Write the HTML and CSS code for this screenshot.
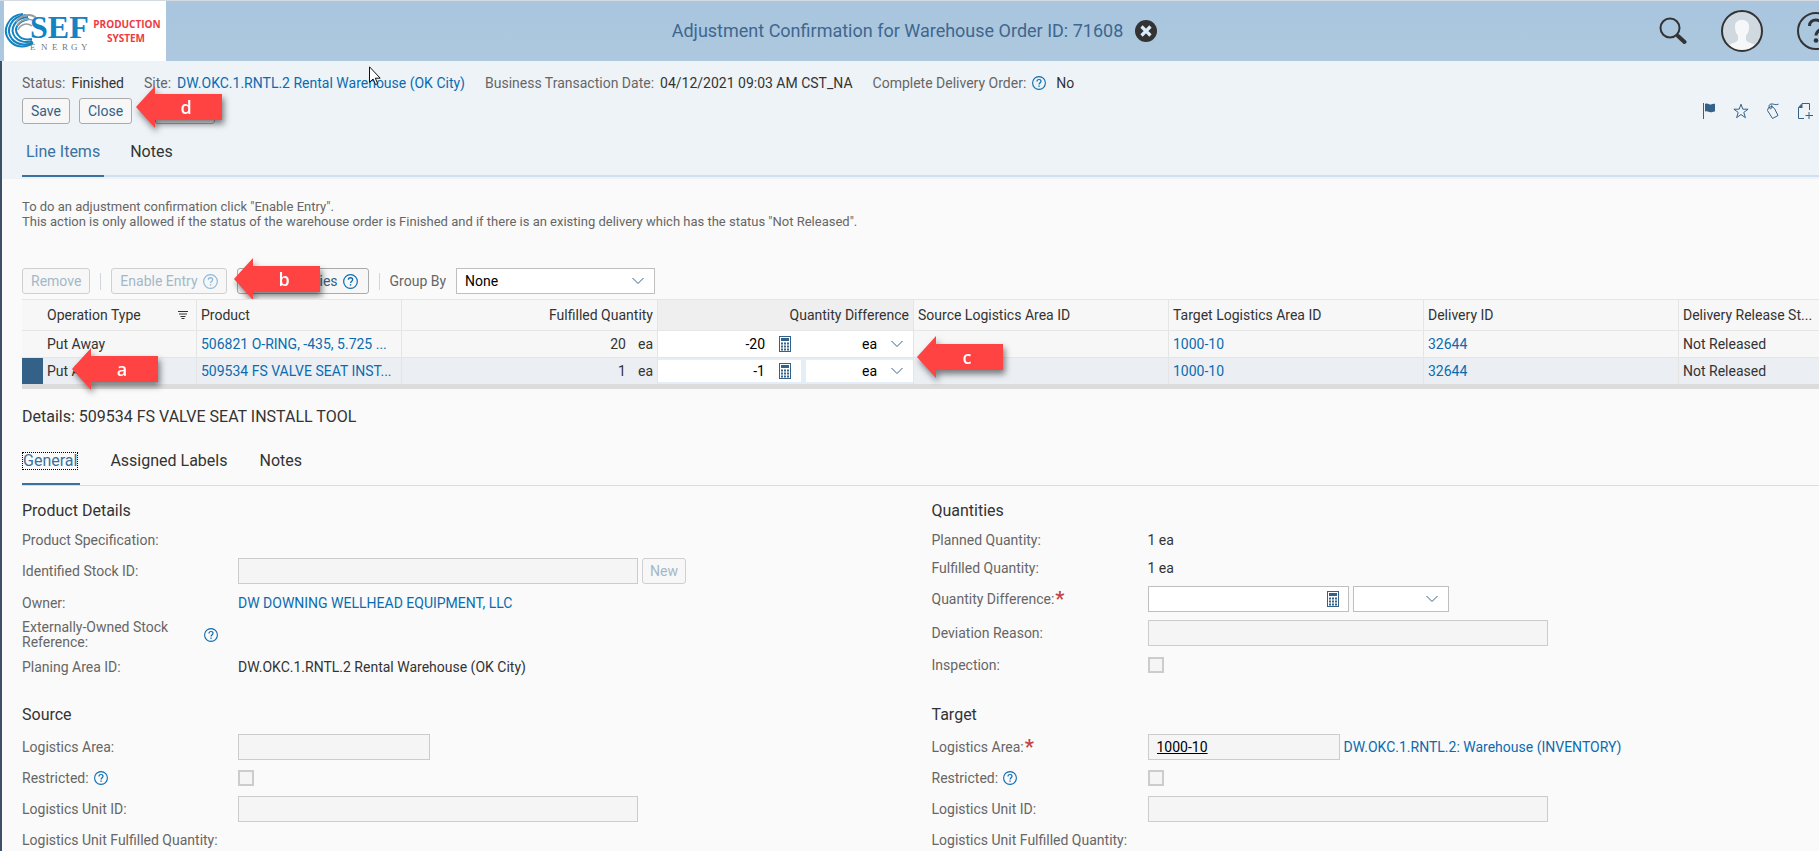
FILE: index.html
```html
<!DOCTYPE html>
<html lang="en">
<head>
    <meta charset="UTF-8">
    <meta name="viewport" content="width=device-width, initial-scale=1.0">
    <title>Adjustment Confirmation</title>
    <link rel="stylesheet" href="styles.css">
</head>
<body>

<!-- shared icons -->
<svg class="sprite" width="0" height="0" aria-hidden="true">
    <symbol id="icon-help" viewBox="0 0 14 14">
        <circle cx="7" cy="7" r="6.4" fill="none" stroke="currentColor" stroke-width="1.1"/>
        <path d="M5 5.4C5 4.2 5.8 3.5 7 3.5s2 .8 2 1.8c0 1.3-1.9 1.5-1.9 3.1" fill="none" stroke="currentColor" stroke-width="1.2"/>
        <rect x="6.4" y="9.5" width="1.3" height="1.3" fill="currentColor"/>
    </symbol>
    <symbol id="icon-calc" viewBox="0 0 12 16">
        <rect x=".5" y=".5" width="11" height="15" fill="#fff" stroke="#346187"/>
        <path d="M2 2h8v3H2zM2 6.500h2v2H2zM5 6.500h2v2H5zM8 6.500h2v2H8zM2 9.500h2v2H2zM5 9.500h2v2H5zM8 9.500h2v2H8zM2 12.500h2v2H2zM5 12.500h2v2H5zM8 12.500h2v2H8z" fill="#346187"/>
    </symbol>
    <symbol id="icon-arrow" viewBox="0 0 86 42">
        <path d="M0 21L19 0v8h67v26H19v8z" fill="#ff4343"/>
    </symbol>
</svg>

<header class="topbar">
    <a class="logo" href="#" aria-label="SEF Energy">
        <svg width="162" height="60" viewBox="0 0 162 60">
            <g fill="none" stroke="#1483c2">
                <path d="M19 13C4 14-3 30 6 40c6 7 16 7 23 2" stroke-width="2"/>
                <path d="M22 14C7 15 1 29 8 38c5 6 14 7 21 3" stroke-width="2"/>
                <path d="M24 16C11 17 5 28 11 36c4 5 11 6 17 4" stroke-width="2"/>
                <path d="M25 18C14 20 9 28 14 34c3 4 9 5 14 4" stroke-width="2"/>
            </g>
            <g fill="none" stroke="#9a9c9e">
                <path d="M12 21c5-8 16-9 21-3" stroke-width="2"/>
                <path d="M13 25c4-8 14-8 18-4" stroke-width="1.500"/>
                <path d="M14 29c3-7 10-7 14-4" stroke-width="1.500"/>
            </g>
            <text class="logo-name" x="26" y="37">SEF</text>
            <text class="logo-sub" x="26 37 48 58 67 77" y="49">ENERGY</text>
            <text class="logo-env" x="123" y="27">PRODUCTION</text>
            <text class="logo-env" x="122" y="41">SYSTEM</text>
        </svg>
    </a>
    <div class="topbar-title">
        <h1>Adjustment Confirmation for Warehouse Order ID: 71608</h1>
        <button class="icon-button" type="button" aria-label="Close window">
            <svg width="22" height="22" viewBox="0 0 22 22"><circle cx="11" cy="11" r="11" fill="#333"/><path d="M6.500 6.500l9 9M15.500 6.500l-9 9" stroke="#dcebf8" stroke-width="3.200"/></svg>
        </button>
    </div>
    <div class="topbar-tools">
        <button class="icon-button" type="button" aria-label="Search">
            <svg width="28" height="28" viewBox="0 0 28 28"><circle cx="11" cy="11" r="9.500" fill="none" stroke="#333" stroke-width="2"/><path d="M17.500 17.500l2 2" stroke="#333" stroke-width="2"/><path d="M19 19l6.500 6" stroke="#333" stroke-width="4" stroke-linecap="round"/></svg>
        </button>
        <button class="icon-button" type="button" aria-label="User">
            <svg width="42" height="42" viewBox="0 0 42 42">
                <circle cx="21" cy="21" r="20" fill="#d1d9e0"/>
                <path d="M21 10c5 0 7.500 3 7 8-.3 4-1.500 6-3 7.500V30c1 2.500 6 3 10 5.500-8 7.500-20 7.500-28 0C11 33 16 32.500 17 30v-4.500c-1.500-1.500-2.700-3.500-3-7.500-.5-5 2-8 7-8z" fill="#f5f7f9"/>
                <circle cx="21" cy="21" r="20" fill="none" stroke="#333" stroke-width="2"/>
            </svg>
        </button>
        <button class="icon-button" type="button" aria-label="Help">
            <svg width="38" height="38" viewBox="0 0 38 38"><circle cx="19" cy="19" r="18" fill="none" stroke="#333" stroke-width="2"/><path d="M12.500 14c0-4 3-6 6.500-6s6.500 2.300 6.500 5.500C25.500 18 19 18 19 23.500" fill="none" stroke="#333" stroke-width="3"/><circle cx="19" cy="28.500" r="2.300" fill="#333"/></svg>
        </button>
    </div>
</header>

<main class="content">
    <section class="object-header">
        <dl class="facts">
            <div><dt>Status:</dt><dd>Finished</dd></div>
            <div><dt>Site:</dt><dd><a href="#">DW.OKC.1.RNTL.2 Rental Warehouse (OK City)</a></dd></div>
            <div><dt>Business Transaction Date:</dt><dd>04/12/2021 09:03 AM CST_NA</dd></div>
            <div class="with-help"><dt>Complete Delivery Order:</dt><dd><svg class="help"><use href="#icon-help"/></svg>No</dd></div>
        </dl>
        <svg class="cursor" width="12" height="20" viewBox="0 0 12 20"><path d="M.5.8v15.500l3.600-3.300 2.400 5.600 2.200-1-2.400-5.400h4.900z" fill="#fff" stroke="#111"/></svg>
        <div class="actions">
            <button class="btn" type="button">Save</button>
            <button class="btn" type="button">Close</button>
            <button class="btn btn-more" type="button" aria-label="More"></button>
            <span class="callout callout-d"><svg><use href="#icon-arrow"/></svg><b>d</b></span>
            <div class="action-icons">
                <button class="icon-button" type="button" aria-label="Flag"><svg width="16" height="16" viewBox="0 0 16 16"><path d="M2.500 0v16" stroke="#346187"/><path d="M4 1c3-1.500 4 1 6 .5 1.500-.5 2.500-1 4-.5v7.500c-2-.5-2.500 1-4.500.8C7.500 9 6.500 7.500 4 8.500z" fill="#346187"/></svg></button>
                <button class="icon-button" type="button" aria-label="Favorite"><svg width="16" height="16" viewBox="0 0 16 16"><path d="M8 1.200l1.800 5h5.300l-4.300 3.200 1.600 5.300L8 11.500l-4.400 3.200 1.600-5.300L.9 6.200h5.300z" fill="none" stroke="#346187"/></svg></button>
                <button class="icon-button" type="button" aria-label="Tag"><svg width="16" height="16" viewBox="0 0 16 16"><path d="M2.500 7.500L3.500 4.500 7 3.500l2.500 2 3.500 7-5.500 3zM5.500 6C3.500 4 3.500 1.500 6 1s4 1.500 7.500.2M5.500 6C7.500 5 7.500 3 6 1.500" fill="none" stroke="#346187"/></svg></button>
                <button class="icon-button" type="button" aria-label="New document"><svg width="16" height="16" viewBox="0 0 16 16"><path d="M7 15.500H1.500V4.500L5 .5h7.500V7M12 9v7M8.500 12.500h7.500" fill="none" stroke="#346187"/><path d="M1.500 5L5.500.5V5z" fill="#346187"/></svg></button>
            </div>
        </div>
        <nav class="tabs tabs-main">
            <a class="active" href="#">Line Items</a>
            <a href="#">Notes</a>
        </nav>
    </section>

    <section class="line-items">
        <p class="hint">To do an adjustment confirmation click "Enable Entry".<br>This action is only allowed if the status of the warehouse order is Finished and if there is an existing delivery which has the status "Not Released".</p>
        <div class="toolbar">
            <button class="btn" type="button" disabled>Remove</button>
            <span class="separator"></span>
            <button class="btn" type="button" disabled>Enable Entry<svg class="help"><use href="#icon-help"/></svg></button>
            <button class="btn btn-wide" type="button">ties<svg class="help"><use href="#icon-help"/></svg></button>
            <span class="separator"></span>
            <label for="group-by">Group By</label>
            <select id="group-by" class="select-group"><option>None</option></select>
            <span class="callout callout-b"><svg><use href="#icon-arrow"/></svg><b>b</b></span>
        </div>
        <div class="table-wrap">
            <table>
                <colgroup>
                    <col class="col-mark"><col class="col-type"><col class="col-product"><col class="col-qty"><col class="col-qty"><col class="col-id"><col class="col-id"><col class="col-id"><col>
                </colgroup>
                <thead>
                    <tr>
                        <th class="mark"></th>
                        <th><span class="sortable">Operation Type<svg width="10" height="8" viewBox="0 0 10 8"><path d="M0 .5h10M1 3h8M2.500 5.500h5M3.500 7.500h3" stroke="#333"/></svg></span></th>
                        <th>Product</th>
                        <th class="num">Fulfilled Quantity</th>
                        <th class="num shaded">Quantity Difference</th>
                        <th>Source Logistics Area ID</th>
                        <th>Target Logistics Area ID</th>
                        <th>Delivery ID</th>
                        <th>Delivery Release St...</th>
                    </tr>
                </thead>
                <tbody>
                    <tr>
                        <td class="mark"></td>
                        <td>Put Away</td>
                        <td><a href="#">506821 O-RING, -435, 5.725 ...</a></td>
                        <td class="num"><span class="qty">20</span>ea</td>
                        <td class="edit"><div class="edit-cell">
                            <span class="calc-field"><input type="text" value="-20" aria-label="Quantity difference"><svg class="calc"><use href="#icon-calc"/></svg></span>
                            <select aria-label="Unit"><option>ea</option></select>
                        </div></td>
                        <td></td>
                        <td><a href="#">1000-10</a></td>
                        <td><a href="#">32644</a></td>
                        <td>Not Released</td>
                    </tr>
                    <tr class="selected">
                        <td class="mark"></td>
                        <td>Put Away</td>
                        <td><a href="#">509534 FS VALVE SEAT INST...</a></td>
                        <td class="num"><span class="qty">1</span>ea</td>
                        <td class="edit"><div class="edit-cell">
                            <span class="calc-field"><input type="text" value="-1" aria-label="Quantity difference"><svg class="calc"><use href="#icon-calc"/></svg></span>
                            <select aria-label="Unit"><option>ea</option></select>
                        </div></td>
                        <td></td>
                        <td><a href="#">1000-10</a></td>
                        <td><a href="#">32644</a></td>
                        <td>Not Released</td>
                    </tr>
                </tbody>
            </table>
            <span class="callout callout-a"><svg><use href="#icon-arrow"/></svg><b>a</b></span>
            <span class="callout callout-c"><svg><use href="#icon-arrow"/></svg><b>c</b></span>
        </div>
    </section>

    <section class="details">
        <h2>Details: 509534 FS VALVE SEAT INSTALL TOOL</h2>
        <nav class="tabs tabs-sub">
            <a class="active" href="#"><span>General</span></a>
            <a href="#">Assigned Labels</a>
            <a href="#">Notes</a>
        </nav>
        <div class="form-grid">
            <div class="form-section">
                <h3>Product Details</h3>
                <div class="field short"><span class="label">Product Specification:</span></div>
                <div class="field">
                    <label class="label" for="stock-id">Identified Stock ID:</label>
                    <input id="stock-id" class="wide" type="text" disabled>
                    <button class="btn" type="button" disabled>New</button>
                </div>
                <div class="field"><span class="label">Owner:</span><a href="#">DW DOWNING WELLHEAD EQUIPMENT, LLC</a></div>
                <div class="field"><span class="label label-wrap"><span>Externally-Owned Stock Reference:</span><svg class="help"><use href="#icon-help"/></svg></span></div>
                <div class="field"><span class="label">Planing Area ID:</span><span>DW.OKC.1.RNTL.2 Rental Warehouse (OK City)</span></div>
            </div>
            <div class="form-section">
                <h3>Quantities</h3>
                <div class="field short"><span class="label">Planned Quantity:</span><span>1 ea</span></div>
                <div class="field short"><span class="label">Fulfilled Quantity:</span><span>1 ea</span></div>
                <div class="field">
                    <label class="label" for="qty-diff">Quantity Difference:<em>*</em></label>
                    <span class="calc-field"><input id="qty-diff" class="medium" type="text"><svg class="calc"><use href="#icon-calc"/></svg></span>
                    <select class="select-unit" aria-label="Unit"><option></option></select>
                </div>
                <div class="field"><label class="label" for="deviation">Deviation Reason:</label><input id="deviation" class="wide" type="text" disabled></div>
                <div class="field"><label class="label" for="inspection">Inspection:</label><input id="inspection" type="checkbox" disabled></div>
            </div>
            <div class="form-section">
                <h3>Source</h3>
                <div class="field"><label class="label" for="source-area">Logistics Area:</label><input id="source-area" class="narrow" type="text" disabled></div>
                <div class="field short"><label class="label" for="source-restricted">Restricted:<svg class="help"><use href="#icon-help"/></svg></label><input id="source-restricted" type="checkbox" disabled></div>
                <div class="field"><label class="label" for="source-unit">Logistics Unit ID:</label><input id="source-unit" class="wide" type="text" disabled></div>
                <div class="field short"><span class="label">Logistics Unit Fulfilled Quantity:</span></div>
            </div>
            <div class="form-section">
                <h3>Target</h3>
                <div class="field">
                    <label class="label" for="target-area">Logistics Area:<em>*</em></label>
                    <input id="target-area" class="narrow underlined" type="text" value="1000-10" readonly>
                    <a href="#">DW.OKC.1.RNTL.2: Warehouse (INVENTORY)</a>
                </div>
                <div class="field short"><label class="label" for="target-restricted">Restricted:<svg class="help"><use href="#icon-help"/></svg></label><input id="target-restricted" type="checkbox" disabled></div>
                <div class="field"><label class="label" for="target-unit">Logistics Unit ID:</label><input id="target-unit" class="wide" type="text" disabled></div>
                <div class="field short"><span class="label">Logistics Unit Fulfilled Quantity:</span></div>
            </div>
        </div>
    </section>
</main>

</body>
</html>
```
FILE: styles.css
```css
* {
    box-sizing: border-box;
}
body {
    margin: 0;
    overflow: hidden;
    border-top: 1px solid #d5dae0;
    background-color: #fafafa;
    color: #333;
    font-family: Roboto, "Liberation Sans", sans-serif;
    font-size: 14px;
    line-height: 20px;
}
h1, h2, h3, p, dl, dd {
    margin: 0;
    font-weight: normal;
}
a {
    color: #0a6cb0;
    text-decoration: none;
}
button, input, select {
    font: inherit;
}
.sprite {
    position: absolute;
}
.help {
    width: 14px;
    height: 14px;
    flex: none;
    color: #0a6cb0;
}
.icon-button {
    display: flex;
    padding: 0;
    border: none;
    background: none;
    cursor: pointer;
}

/* top bar */
.topbar {
    display: grid;
    grid-template-columns: 1fr auto 1fr;
    align-items: center;
    height: 60px;
    background: linear-gradient(#a9c6de, #adc8df);
}
.logo {
    display: flex;
    width: 162px;
    margin-left: 4px;
    background-color: #fff;
}
.logo-name {
    font: bold 32px "Liberation Serif", serif;
    fill: #1483c2;
}
.logo-sub {
    font: 9px "Liberation Serif", serif;
    fill: #77797c;
}
.logo-env {
    font: bold 10px "Open Sans", sans-serif;
    fill: #ee3a43;
    text-anchor: middle;
}
.topbar-title {
    display: flex;
    align-items: center;
    gap: 12px;
    padding-left: 10px;
}
.topbar-title h1 {
    font-size: 18px;
    color: #3f668e;
}
.topbar-tools {
    display: flex;
    justify-content: flex-end;
    align-items: center;
    gap: 34px;
    margin-right: -16px;
}

/* object header */
.content {
    border-left: 2px solid #3d5068;
}
.object-header {
    position: relative;
    padding: 12px 0 2px 20px;
    background-color: #eef3f8;
}
.facts {
    display: flex;
    gap: 20px;
}
.facts div {
    display: flex;
    gap: 6px;
}
.facts dt {
    color: #666;
}
.facts dd {
    display: flex;
    align-items: center;
    gap: 10px;
}
.cursor {
    position: absolute;
    left: 367px;
    top: 5px;
}
.actions {
    position: relative;
    display: flex;
    align-items: center;
    gap: 9px;
    margin-top: 5px;
}
.action-icons {
    display: flex;
    gap: 16px;
    margin-left: auto;
    padding-right: 6px;
}
.btn {
    display: inline-flex;
    align-items: center;
    justify-content: center;
    gap: 5px;
    height: 26px;
    padding: 0 8px;
    border: 1px solid #aaa;
    border-radius: 3px;
    background-color: #f7f7f7;
    color: #346187;
    cursor: pointer;
}
.btn .help {
    width: 15px;
    height: 15px;
}
.btn:disabled {
    border-color: #d0d0d0;
    color: #a3b7c8;
    cursor: default;
}
.btn:disabled .help {
    color: #8cb9da;
}
.field .btn {
    padding: 0 7px;
}
.btn-more {
    width: 60px;
    margin-left: 14px;
}
.btn-wide {
    width: 132px;
    padding-right: 10px;
    justify-content: flex-end;
}
.tabs {
    display: flex;
    font-size: 16px;
}
.tabs a {
    border-bottom: 2px solid transparent;
    color: #333;
}
.tabs a.active {
    border-bottom-color: #3b719f;
    color: #3b719f;
}
.tabs-main {
    gap: 22px;
    margin-top: 18px;
    box-shadow: inset 0 -2px #d1e0ee;
}
.tabs-main a {
    padding: 0 4px 13px;
}
.tabs-sub {
    gap: 28px;
    margin: 24px 0 0 20px;
    border-bottom: 1px solid #d1e0ee;
}
.tabs-sub a {
    padding: 0 2px 12px;
}
.tabs-sub .active {
    padding-left: 0;
}
.tabs-sub .active span {
    display: block;
    height: 18px;
    margin: 1px 0;
    line-height: 16px;
    border: 1px dotted #000;
}

/* line items */
.line-items {
    padding: 20px 0 0 20px;
}
.hint {
    color: #666;
    font-size: 13px;
    line-height: 15px;
}
.toolbar {
    position: relative;
    display: flex;
    align-items: center;
    gap: 10px;
    margin: 39px 0 5px;
}
.toolbar label {
    color: #666;
}
.separator {
    width: 1px;
    height: 17px;
    background-color: #d1d6dc;
}
select {
    appearance: none;
    height: 26px;
    padding: 0 8px;
    border: 1px solid #bfbfbf;
    border-radius: 0;
    background: #fff url("data:image/svg+xml,%3Csvg xmlns='http://www.w3.org/2000/svg' width='12' height='8'%3E%3Cpath d='M.5 1L6 6.500 11.500 1' fill='none' stroke='%23346187'/%3E%3C/svg%3E") no-repeat right 10px center;
    color: #000;
}
.select-group {
    width: 199px;
}
.table-wrap {
    position: relative;
    border-bottom: 5px solid #dcdcdc;
}
table {
    width: 100%;
    table-layout: fixed;
    border-spacing: 0;
    border-top: 1px solid #e5e5e5;
    background-color: #f7f7f7;
}
.col-mark {
    width: 21px;
}
.col-type {
    width: 154px;
}
.col-product {
    width: 205px;
}
.col-qty {
    width: 256px;
}
.col-id {
    width: 255px;
}
th, td {
    height: 27px;
    padding: 0 4px;
    border-right: 1px solid #e5e5e5;
    border-bottom: 1px solid #e5e5e5;
    font-weight: normal;
    text-align: left;
    white-space: nowrap;
}
th {
    height: 31px;
}
th:last-child, td:last-child {
    border-right: none;
}
.mark {
    border-right: none;
}
.num {
    text-align: right;
}
.qty {
    margin-right: 12px;
}
.shaded {
    background-color: #efefef;
}
.sortable {
    display: flex;
    align-items: center;
    justify-content: space-between;
    padding-right: 4px;
}
.selected td {
    height: 26px;
    border-bottom: none;
    background-color: #ebeff4;
}
.selected .mark {
    background-color: #346187;
}
td.edit {
    padding: 0;
    background-color: #fff;
}
.selected td.edit {
    background-color: #e5edf7;
}
.edit-cell {
    display: flex;
    gap: 5px;
}
.edit-cell .calc-field {
    flex: 1;
}
.edit-cell input {
    width: 100%;
    height: 22px;
    padding: 0 36px 0 8px;
    border: none;
    text-align: right;
}
.edit-cell select {
    width: 107px;
    height: 22px;
    padding-right: 36px;
    border: none;
    text-align: right;
    text-align-last: right;
}
.calc-field {
    position: relative;
    display: flex;
}
.calc {
    position: absolute;
    right: 10px;
    top: 50%;
    width: 12px;
    height: 16px;
    margin-top: -8px;
}

/* details */
.details h2 {
    margin: 18px 0 0 20px;
    font-size: 16px;
}
.form-grid {
    display: grid;
    grid-template-columns: 1fr 1fr;
    row-gap: 23px;
    margin-right: -2px;
    padding-top: 15px;
}
.form-section {
    padding-left: 20px;
}
.form-section h3 {
    margin-bottom: 5px;
    font-size: 16px;
}
.field {
    display: flex;
    align-items: center;
    gap: 4px;
    min-height: 30px;
    padding: 2px 0;
}
.field.short {
    min-height: 28px;
}
.label {
    display: flex;
    align-items: center;
    gap: 5px;
    width: 212px;
    color: #666;
}
.label em {
    margin-left: -4px;
    color: #c14646;
    font-size: 20px;
    font-style: normal;
    font-weight: bold;
    line-height: 16px;
}
.label-wrap {
    justify-content: space-between;
    padding-right: 16px;
    line-height: 15px;
}
.label-wrap span {
    width: 160px;
}
.field input[type="text"] {
    height: 26px;
    margin: 2px 0;
    padding: 0 8px;
    border: 1px solid #bfbfbf;
    border-radius: 0;
    background-color: #fff;
    color: #000;
}
.field input[type="text"]:disabled,
.field input[type="text"]:read-only {
    border-color: #ccc;
    background-color: #f5f5f5;
}
.field input.wide {
    width: 400px;
}
.field input.medium {
    width: 201px;
}
.field input.narrow {
    width: 192px;
}
.underlined {
    text-decoration: underline;
}
.select-unit {
    width: 96px;
}
input[type="checkbox"] {
    appearance: none;
    width: 16px;
    height: 16px;
    margin: 0;
    border: 2px solid #ccc;
    background-color: #f5f5f5;
}

/* lettered callouts */
.callout {
    position: absolute;
    width: 86px;
    height: 42px;
    filter: drop-shadow(2px 4px 3px rgba(0, 0, 0, 0.5));
}
.callout svg {
    display: block;
    width: 86px;
    height: 42px;
}
.callout b {
    position: absolute;
    left: 14px;
    right: 0;
    top: 11px;
    color: #fff;
    font-family: "Open Sans", sans-serif;
    font-size: 18px;
    font-weight: 600;
    text-align: center;
}
.callout-a {
    left: 50px;
    top: 49px;
}
.callout-b {
    left: 212px;
    top: -10px;
}
.callout-c {
    left: 895px;
    top: 37px;
}
.callout-d {
    left: 114px;
    top: -12px;
}
```
